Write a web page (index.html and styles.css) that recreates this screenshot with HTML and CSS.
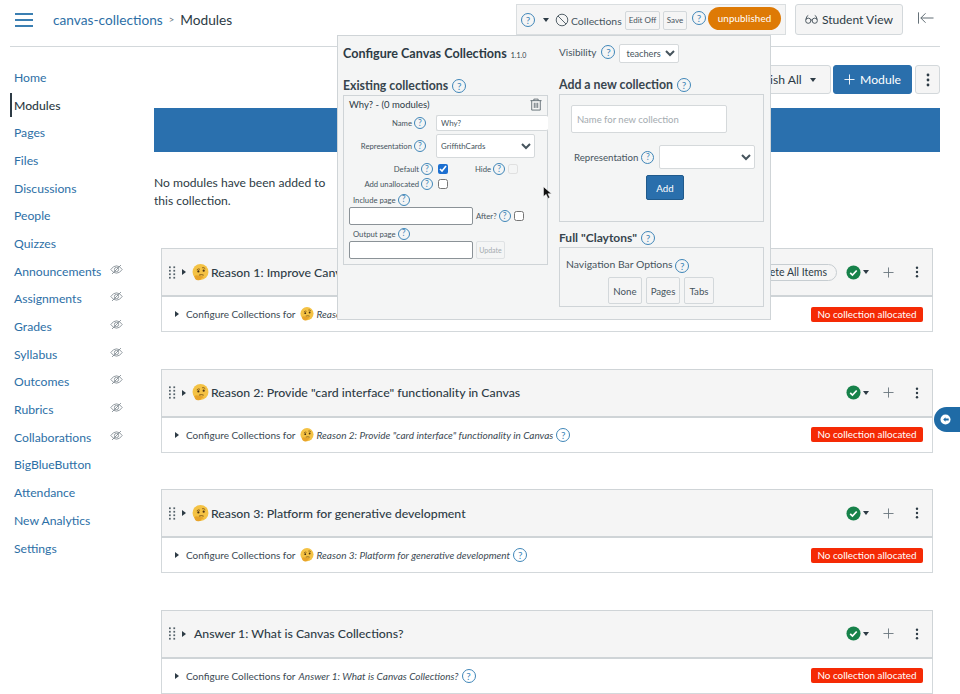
FILE: index.html
```html
<!DOCTYPE html>
<html lang="en">
<head>
<meta charset="utf-8">
<title>Modules</title>
<link rel="stylesheet" href="styles.css">
</head>
<body>
<svg class="defs" width="0" height="0" aria-hidden="true">
  <defs>
    <symbol id="think" viewBox="0 0 32 32">
      <circle cx="16" cy="15" r="15" fill="#f4c244"/>
      <path d="M9 11q3-3 6-1M19 7q4-1 6 2" stroke="#7a5416" stroke-width="1.6" fill="none"/>
      <circle cx="12" cy="14" r="2.1" fill="#4a3212"/>
      <circle cx="22" cy="12.500" r="2.1" fill="#4a3212"/>
      <path d="M13 21q5-2 9 0" stroke="#7a5416" stroke-width="1.8" fill="none"/>
      <path d="M4 23q4-3 8-1l8 1q3 1 1 3l-3 0q1 3-3 4-6 2-9-2z" fill="#e8a42a"/>
    </symbol>
    <symbol id="eye" viewBox="0 0 16 16">
      <path d="M1 8q3-4.500 7-4.500T15 8q-3 4.500-7 4.500T1 8z" fill="none" stroke="#7b858c" stroke-width="1"/>
      <circle cx="8" cy="8" r="2.600" fill="none" stroke="#7b858c" stroke-width="1"/>
      <path d="M2.500 13.500L13.500 2.500" stroke="#7b858c" stroke-width="1"/>
    </symbol>
    <symbol id="grip" viewBox="0 0 8 14">
      <g fill="#56636b">
        <rect x="0" y="0" width="2" height="2"/><rect x="5" y="0" width="2" height="2"/>
        <rect x="0" y="4" width="2" height="2"/><rect x="5" y="4" width="2" height="2"/>
        <rect x="0" y="8" width="2" height="2"/><rect x="5" y="8" width="2" height="2"/>
        <rect x="0" y="12" width="2" height="2"/><rect x="5" y="12" width="2" height="2"/>
      </g>
    </symbol>
    <symbol id="check" viewBox="0 0 16 16">
      <circle cx="8" cy="8" r="7.500" fill="#17824a"/>
      <path d="M4.500 8.300l2.400 2.400 4.500-4.800" fill="none" stroke="#fff" stroke-width="1.800"/>
    </symbol>
    <symbol id="plus" viewBox="0 0 12 12">
      <path d="M6 .5v11M.5 6h11" stroke="#6b777f" stroke-width="1"/>
    </symbol>
    <symbol id="kebab" viewBox="0 0 4 14">
      <circle cx="2" cy="2" r="1.400" fill="#2d3b45"/><circle cx="2" cy="7" r="1.400" fill="#2d3b45"/><circle cx="2" cy="12" r="1.400" fill="#2d3b45"/>
    </symbol>
  </defs>
</svg>

<div class="page">
  <header class="topbar">
    <button class="hamburger" aria-label="Menu"><span></span><span></span><span></span></button>
    <nav class="crumbs">
      <a class="link">canvas-collections</a>
      <span class="crumb-sep">&gt;</span>
      <span>Modules</span>
    </nav>
    <div class="cc-bar">
      <span class="help">?</span>
      <span class="caret caret-bar"></span>
      <svg class="ban" viewBox="0 0 14 14"><circle cx="7" cy="7" r="5.800" fill="none" stroke="#56636b" stroke-width="1"/><path d="M3 3l8 8" stroke="#56636b" stroke-width="1"/></svg>
      <span class="cc-label">Collections</span>
      <span class="mini-btn edit">Edit Off</span>
      <span class="mini-btn save">Save</span>
      <span class="help help-raised">?</span>
      <span class="pill-orange">unpublished</span>
    </div>
    <button class="student-btn">
      <svg class="glasses" viewBox="0 0 16 12"><circle cx="4" cy="7.500" r="3.200" fill="none" stroke="#2d3b45"/><circle cx="12" cy="7.500" r="3.200" fill="none" stroke="#2d3b45"/><path d="M7 7q1-1 2 0M1 6q1-5 3-5M15 6q-1-5-3-5" fill="none" stroke="#2d3b45"/></svg>
      Student View
    </button>
    <svg class="collapse" viewBox="0 0 17 12"><path d="M.5 0v12M16.500 6H3M8 1L3 6l5 5" fill="none" stroke="#56636b" stroke-width="1"/></svg>
  </header>

  <div class="layout">
    <aside class="sidebar">
      <a class="nav-item">Home</a>
      <a class="nav-item active">Modules</a>
      <a class="nav-item">Pages</a>
      <a class="nav-item">Files</a>
      <a class="nav-item">Discussions</a>
      <a class="nav-item">People</a>
      <a class="nav-item">Quizzes</a>
      <a class="nav-item">Announcements<svg class="eye"><use href="#eye"/></svg></a>
      <a class="nav-item">Assignments<svg class="eye"><use href="#eye"/></svg></a>
      <a class="nav-item">Grades<svg class="eye"><use href="#eye"/></svg></a>
      <a class="nav-item">Syllabus<svg class="eye"><use href="#eye"/></svg></a>
      <a class="nav-item">Outcomes<svg class="eye"><use href="#eye"/></svg></a>
      <a class="nav-item">Rubrics<svg class="eye"><use href="#eye"/></svg></a>
      <a class="nav-item">Collaborations<svg class="eye"><use href="#eye"/></svg></a>
      <a class="nav-item">BigBlueButton</a>
      <a class="nav-item">Attendance</a>
      <a class="nav-item">New Analytics</a>
      <a class="nav-item">Settings</a>
    </aside>

    <main class="main">
      <div class="actions">
        <button class="btn publish">Publish All <span class="caret"></span></button>
        <button class="btn primary"><svg class="btn-plus" viewBox="0 0 12 12"><path d="M6 .5v11M.5 6h11" stroke="#fff" stroke-width="1"/></svg>Module</button>
        <button class="btn kebab-btn"><svg class="kebab-sm"><use href="#kebab"/></svg></button>
      </div>
      <div class="banner"></div>
      <p class="empty">No modules have been added to this collection.</p>

      <section class="module">
        <div class="mod-head">
          <svg class="grip"><use href="#grip"/></svg><span class="tri"></span>
          <svg class="emoji"><use href="#think"/></svg>
          <h2 class="mod-title">Reason 1: Improve Canvas usability</h2>
          <span class="complete">Complete All Items</span>
          <svg class="check"><use href="#check"/></svg><span class="caret"></span>
          <svg class="plus"><use href="#plus"/></svg>
          <svg class="kebab"><use href="#kebab"/></svg>
        </div>
        <div class="mod-body">
          <span class="tri tri-sm"></span>Configure Collections for
          <svg class="emoji-sm"><use href="#think"/></svg>
          <em>Reason 1: Improve Canvas usability</em>
          <span class="badge">No collection allocated</span>
        </div>
      </section>

      <section class="module">
        <div class="mod-head">
          <svg class="grip"><use href="#grip"/></svg><span class="tri"></span>
          <svg class="emoji"><use href="#think"/></svg>
          <h2 class="mod-title">Reason 2: Provide "card interface" functionality in Canvas</h2>
          <svg class="check"><use href="#check"/></svg><span class="caret"></span>
          <svg class="plus"><use href="#plus"/></svg>
          <svg class="kebab"><use href="#kebab"/></svg>
        </div>
        <div class="mod-body">
          <span class="tri tri-sm"></span>Configure Collections for
          <svg class="emoji-sm"><use href="#think"/></svg>
          <em>Reason 2: Provide "card interface" functionality in Canvas</em>
          <span class="help">?</span>
          <span class="badge">No collection allocated</span>
        </div>
      </section>

      <section class="module">
        <div class="mod-head">
          <svg class="grip"><use href="#grip"/></svg><span class="tri"></span>
          <svg class="emoji"><use href="#think"/></svg>
          <h2 class="mod-title">Reason 3: Platform for generative development</h2>
          <svg class="check"><use href="#check"/></svg><span class="caret"></span>
          <svg class="plus"><use href="#plus"/></svg>
          <svg class="kebab"><use href="#kebab"/></svg>
        </div>
        <div class="mod-body">
          <span class="tri tri-sm"></span>Configure Collections for
          <svg class="emoji-sm"><use href="#think"/></svg>
          <em>Reason 3: Platform for generative development</em>
          <span class="help">?</span>
          <span class="badge">No collection allocated</span>
        </div>
      </section>

      <section class="module">
        <div class="mod-head">
          <svg class="grip"><use href="#grip"/></svg><span class="tri"></span>
          <h2 class="mod-title title-noemoji">Answer 1: What is Canvas Collections?</h2>
          <svg class="check"><use href="#check"/></svg><span class="caret"></span>
          <svg class="plus"><use href="#plus"/></svg>
          <svg class="kebab"><use href="#kebab"/></svg>
        </div>
        <div class="mod-body">
          <span class="tri tri-sm"></span>Configure Collections for
          <em>Answer 1: What is Canvas Collections?</em>
          <span class="help">?</span>
          <span class="badge">No collection allocated</span>
        </div>
      </section>
    </main>
  </div>

  <div class="panel">
    <div class="col col-left">
      <h3 class="panel-title">Configure Canvas Collections <small>1.1.0</small></h3>
      <h4 class="sec-title">Existing collections <span class="help">?</span></h4>
      <div class="box coll-box">
        <div class="coll-head"><span>Why? - (0 modules)</span>
          <svg class="trash" viewBox="0 0 14 14"><path d="M.5 2.500h13M4.500 2.500V.7h5v1.800M2 2.500v11h10v-11M5 5v6M7 5v6M9 5v6" fill="none" stroke="#56636b" stroke-width="1"/></svg>
        </div>
        <div class="row row-name">
          <label class="lbl lbl-r">Name <span class="help">?</span></label>
          <input class="field name-field" type="text" value="Why?">
        </div>
        <div class="row row-rep">
          <label class="lbl lbl-r">Representation <span class="help">?</span></label>
          <select class="field rep-field"><option>GriffithCards</option></select>
        </div>
        <div class="row row-check">
          <label class="lbl lbl-w">Default <span class="help">?</span></label>
          <input class="cb cb-on" type="checkbox" checked>
          <label class="lbl lbl-hide">Hide <span class="help">?</span></label>
          <input class="cb cb-off" type="checkbox" disabled>
        </div>
        <div class="row row-check row-add">
          <label class="lbl lbl-w">Add unallocated <span class="help">?</span></label>
          <input class="cb cb-on" type="checkbox">
        </div>
        <div class="lbl page-lbl">Include page <span class="help">?</span></div>
        <div class="row row-page">
          <input class="field page-field" type="text">
          <label class="lbl after">After? <span class="help">?</span></label>
          <input class="cb" type="checkbox">
        </div>
        <div class="lbl page-lbl">Output page <span class="help">?</span></div>
        <div class="row row-page">
          <input class="field page-field" type="text">
          <button class="update">Update</button>
        </div>
      </div>
    </div>
    <div class="col col-right">
      <div class="vis-row"><span class="vis-label">Visibility</span> <span class="help">?</span>
        <select class="field vis-field"><option>teachers</option></select>
      </div>
      <h4 class="sec-title">Add a new collection <span class="help">?</span></h4>
      <div class="box add-box">
        <input class="field new-name" type="text" placeholder="Name for new collection">
        <div class="new-rep">
          <label class="lbl new-lbl">Representation <span class="help">?</span></label>
          <select class="field new-sel"><option></option></select>
        </div>
        <button class="add-btn">Add</button>
      </div>
      <h4 class="sec-title claytons">Full "Claytons" <span class="help">?</span></h4>
      <div class="box nav-box">
        <div class="nav-opts">Navigation Bar Options <span class="help">?</span></div>
        <div class="opt-row">
          <button class="opt">None</button>
          <button class="opt">Pages</button>
          <button class="opt">Tabs</button>
        </div>
      </div>
    </div>
  </div>

  <svg class="cursor" viewBox="0 0 10 15"><path d="M.5.5v11l3-2.500 2 4.500 2-1-2-4.200h4z" fill="#111" stroke="#fff" stroke-width=".6"/></svg>

  <div class="side-tab">
    <svg class="side-icon" viewBox="0 0 12 12"><circle cx="6" cy="6" r="5.500" fill="#fff"/><path d="M6 3.500L3.500 6 6 8.500V7h3.500V5H6z" fill="#1f6ba6"/></svg>
  </div>
</div>
</body>
</html>
```
FILE: styles.css
```css
* { box-sizing: border-box; }
html, body { margin: 0; height: 694px; overflow: hidden; background: #fff; }
body { font-family: Lato, "Open Sans", sans-serif; color: #2d3b45; font-size: 12px; }
.defs { position: absolute; }
button, input, select { font-family: inherit; }
.page { position: relative; width: 960px; height: 694px; overflow: hidden; }
.link { color: #2d6fa6; }

/* top bar */
.topbar { display: flex; align-items: flex-start; height: 47px; margin: 0 20px 0 10px; padding-top: 4px; border-bottom: 1px solid #d3d8db; position: relative; }
.hamburger { width: 18px; height: 14px; margin: 9px 20px 0 5px; padding: 0; border: 0; background: none; display: flex; flex-direction: column; justify-content: space-between; }
.hamburger span { display: block; height: 2px; background: #3b7fb2; }
.crumbs { font-size: 13.700px; line-height: 31px; display: flex; gap: 4px; color: #2d3b45; }
.crumb-sep { font-size: 9.500px; color: #66727a; margin: 0 2px; }
.cc-bar { margin-left: auto; width: 270px; height: 31px; background: #f5f5f5; border: 1px solid #dadee0; display: flex; align-items: center; padding: 0 6px 0 4px; flex: none; }
.help { display: inline-flex; width: 14px; height: 14px; border: 1px solid #3f86b8; border-radius: 50%; align-items: center; justify-content: center; font-size: 10px; line-height: 1; color: #3f86b8; vertical-align: -2px; font-weight: 400; font-style: normal; flex: none; }
.caret { display: inline-block; width: 0; height: 0; border-left: 3.500px solid transparent; border-right: 3.500px solid transparent; border-top: 4px solid #2d3b45; flex: none; }
.caret-bar { margin-left: 8px; }
.ban { width: 14px; height: 14px; margin-left: 6px; flex: none; }
.cc-label { font-size: 10.400px; margin-left: 2px; color: #46545d; width: 54px; margin-top: 2px; flex: none; white-space: nowrap; }
.mini-btn { height: 19px; border: 1px solid #d3d8db; border-radius: 2px; background: #f5f5f5; font-size: 8px; line-height: 17px; text-align: center; color: #46545d; margin-top: 1px; flex: none; }
.edit { width: 35px; }
.save { width: 24px; margin-left: 3px; }
.help-raised { margin: -4px 2px 0 5px; }
.pill-orange { width: 73px; height: 23px; background: #de7a05; color: #fff; border-radius: 12px; font-size: 9.800px; line-height: 22px; text-align: center; margin-top: -3px; letter-spacing: .1px; flex: none; }
.student-btn { margin: 0 37px 0 9px; width: 108px; height: 31px; border: 1px solid #d3d8db; border-radius: 3px; background: #f5f5f5; color: #2d3b45; font-size: 12.100px; padding: 0; display: flex; align-items: center; justify-content: center; gap: 4px; flex: none; }
.glasses { width: 13px; height: 11px; }
.collapse { position: absolute; right: 6px; top: 12px; width: 16px; height: 12px; }

/* layout */
.layout { display: flex; }
.sidebar { width: 154px; padding: 16.500px 0 0 10px; flex: none; }
.nav-item { display: flex; justify-content: space-between; align-items: center; height: 27.700px; width: 113px; padding-left: 4px; font-size: 12.200px; color: #2d6fa6; }
.nav-item.active { color: #2d3b45; border-left: 2px solid #2d3b45; padding-left: 2px; height: 24px; margin: 2px 0 1.700px; font-weight: 500; }
.eye { width: 13px; height: 13px; margin-top: -4px; }
.main { width: 786px; flex: none; }
.actions { display: flex; justify-content: flex-end; gap: 3px; padding-top: 18px; height: 61px; }
.btn { height: 29px; border: 1px solid #d3d8db; border-radius: 3px; background: #f5f5f5; font-size: 12.200px; color: #2d3b45; padding: 0; }
.publish { width: 100px; margin-right: -1px; }
.publish .caret { margin-left: 5px; vertical-align: 2px; }
.primary { width: 79px; background: #2a6fac; border-color: #2a6fac; color: #fff; display: flex; align-items: center; justify-content: center; gap: 5px; }
.btn-plus { width: 11px; height: 11px; }
.kebab-btn { width: 25px; display: flex; align-items: center; justify-content: center; }
.kebab-sm { width: 4px; height: 14px; }
.banner { height: 44px; background: #2a70ae; }
.empty { width: 190px; margin: 22px 0 39px; font-size: 12.100px; line-height: 17.500px; }

/* modules */
.module { margin: 0 7px 36.500px; height: 84px; }
.mod-head { height: 49px; background: #f5f5f5; border: 1px solid #cfd4d7; border-bottom-width: 2px; display: flex; align-items: center; padding-left: 7px; }
.grip { width: 7px; height: 13px; flex: none; }
.tri { width: 0; height: 0; border-top: 3px solid transparent; border-bottom: 3px solid transparent; border-left: 4px solid #2d3b45; margin-left: 6px; flex: none; }
.emoji { width: 17px; height: 17px; margin: 0 2px 0 6px; flex: none; }
.mod-title { margin: 0 auto 0 0; font-size: 12.300px; font-weight: 500; white-space: nowrap; }
.title-noemoji { margin-left: 8px; }
.complete { border: 1px solid #c7cdd1; border-radius: 9px; height: 17px; line-height: 15px; font-size: 10.500px; padding: 0 6px; width: 104px; white-space: nowrap; margin-right: 9px; flex: none; }
.check { width: 15px; height: 15px; margin-right: 2px; flex: none; }
.plus { width: 11px; height: 11px; margin: 0 21px 0 14px; flex: none; }
.kebab { width: 4px; height: 12px; margin-right: 13px; flex: none; }
.mod-body { height: 35px; border: 1px solid #d3d8db; border-top: 0; display: flex; align-items: center; padding-left: 13px; font-size: 10px; color: #3c4a53; white-space: nowrap; gap: 3px; }
.tri-sm { margin: 0 4px 0 0; }
.emoji-sm { width: 14px; height: 14px; margin-left: 1px; flex: none; }
.badge { margin-left: auto; margin-right: 9px; width: 112px; height: 15px; background: #f52a05; border-radius: 2px; color: #fff; font-size: 9.900px; line-height: 15px; text-align: center; flex: none; }

/* configure panel */
.panel { position: absolute; left: 337px; top: 35px; width: 434px; height: 285px; background: #f4f5f5; border: 1px solid #cfd4d7; display: grid; grid-template-columns: 205px 205px; column-gap: 11px; align-content: start; padding: 0 0 0 5px; }
.panel-title { margin: 9px 0 0; font-size: 12.600px; font-weight: 700; line-height: 18px; white-space: nowrap; }
.panel-title small { font-size: 7px; font-weight: 400; margin-left: 1px; }
.sec-title { display: flex; align-items: center; gap: 4px; margin: 14px 0 1px; font-size: 12.300px; font-weight: 700; line-height: 16px; height: 16px; white-space: nowrap; color: #38454e; }
.box { border: 1px solid #cfd4d7; }
.coll-box { height: 170px; padding: 0 0 0 5px; position: relative; }
.coll-head { display: flex; justify-content: space-between; align-items: center; height: 17px; font-size: 9.500px; padding-right: 5px; }
.trash { width: 12px; height: 13px; }
.row { display: flex; align-items: center; }
.lbl { display: flex; align-items: center; gap: 2px; font-size: 7.700px; color: #46545d; white-space: nowrap; flex: none; }
.lbl .help { width: 12px; height: 12px; font-size: 8.500px; }
.lbl-r { width: 77px; justify-content: flex-end; margin-right: 10px; }
.field { background: #fff; border: 1px solid #d5d9db; border-radius: 2px; color: #46545d; font-size: 7.900px; padding: 0 4px; }
.row-name { height: 18px; margin-top: 1px; }
.name-field { width: 112px; height: 16px; border-right: 0; flex: none; }
.row-rep { height: 24px; margin-top: 2px; }
.rep-field { width: 99px; height: 24px; padding: 0; }
.row-check { height: 14px; margin-top: 4px; }
.row-add { margin-top: 1px; }
.lbl-w { width: 84px; justify-content: flex-end; margin-right: 5px; }
.cb { width: 10px; height: 10px; margin: 0; flex: none; accent-color: #1c6fd0; }
.lbl-hide { margin-left: 27px; margin-right: 3px; }
.cb-off { opacity: .5; }
.page-lbl { margin: 2px 0 0 4px; height: 13px; }
.row-page { gap: 3px; height: 18px; margin-top: 1px; }
.page-field { width: 124px; height: 18px; border-color: #8b9297; }
.update { width: 29px; height: 18px; border: 1px solid #dfe2e4; border-radius: 2px; background: #f4f5f5; color: #a4abb0; font-size: 7px; padding: 0; }

.vis-row { height: 19px; margin-top: 8px; display: flex; align-items: center; gap: 3px; font-size: 10px; color: #46545d; }
.vis-label { margin-top: -4px; }
.vis-row .help { margin: -4px 0 0 2px; }
.vis-field { width: 60px; height: 19px; margin-left: 1px; padding: 0 0 0 2px; font-size: 9.200px; }
.add-box { height: 128px; display: flex; flex-direction: column; padding: 10px 0 0 11px; }
.new-name { width: 156px; height: 28px; padding-left: 5px; font-size: 9.500px; flex: none; }
.new-name::placeholder { color: #a4abb0; }
.new-rep { display: flex; align-items: center; margin-top: 12px; height: 24px; }
.new-lbl { font-size: 9.700px; margin-left: 3px; width: 85px; gap: 3px; }
.new-lbl .help { width: 13px; height: 13px; }
.new-sel { width: 96px; height: 24px; }
.add-btn { width: 38px; height: 25px; margin: 6px 0 0 75px; background: #2a6fac; border: 1px solid #205a8c; border-radius: 2px; color: #fff; font-size: 9.700px; padding: 0; }
.col-right .claytons { margin: 8px 0 1px; font-size: 12px; }
.nav-box { height: 60px; padding: 9px 0 0 6px; }
.nav-opts { font-size: 10.400px; line-height: 14px; color: #46545d; }
.opt-row { display: flex; gap: 4px; margin: 4px 0 0 42px; }
.opt { height: 27px; width: 34px; border: 1px solid #d3d8db; border-radius: 2px; background: #f5f5f5; font-size: 9.700px; color: #46545d; padding: 0; }
.opt:last-child { width: 30px; }

.cursor { position: absolute; left: 543px; top: 186px; width: 9px; height: 14px; }
.side-tab { position: absolute; left: 934px; top: 407px; width: 26px; height: 25px; background: #1f6ba6; border-radius: 13px 0 0 13px; display: flex; align-items: center; padding-left: 6px; }
.side-icon { width: 11px; height: 11px; }
```
